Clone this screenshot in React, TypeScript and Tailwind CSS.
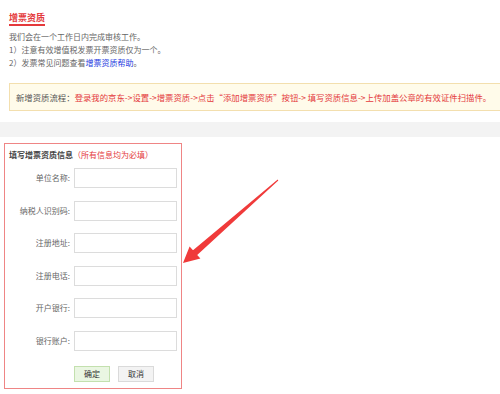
import React from 'react';

const fields = ['单位名称:', '纳税人识别码:', '注册地址:', '注册电话:', '开户银行:', '银行账户:'];

export default function App() {
  return (
    <div className="relative w-[500px] h-[394px] overflow-hidden bg-white font-['Noto_Sans_CJK_SC',sans-serif]">
      {/* intro */}
      <div className="pl-[9px] pt-[12px]">
        <div className="w-fit text-[9px] leading-[11px] font-bold text-[#e4393c] border-b-2 border-[#e4393c] pb-[1px]">
          增票资质
        </div>
        <div className="mt-[4px] text-[8px] leading-[13px] text-[#666]">
          <p>我们会在一个工作日内完成审核工作。</p>
          <p>1）注意有效增值税发票开票资质仅为一个。</p>
          <p>
            2）发票常见问题查看<span className="text-[#1d3be0]">增票资质帮助</span>。
          </p>
        </div>
      </div>

      {/* process tip */}
      <div className="ml-[9px] mt-[14px] h-[28px] w-[500px] flex items-center pl-[6px] border border-[#f3dfae] bg-[#fffbea] text-[8.4px] whitespace-nowrap">
        <span className="text-[#555]">新增资质流程：</span>
        <span className="text-[#e4393c]">
          登录我的京东-&gt;设置-&gt;增票资质-&gt;点击“添加增票资质”按钮-&gt; 填写资质信息-&gt;上传加盖公章的有效证件扫描件。
        </span>
      </div>

      <div className="mt-[11px] h-[15px] bg-[#f3f3f3]" />

      {/* form */}
      <div className="ml-[4px] mt-[6px] w-[178px] h-[246px] border border-[#ef8585]">
        <div className="pl-[4px] pt-[5px] text-[8px] leading-[12px] whitespace-nowrap">
          <span className="font-bold text-[#444]">填写增票资质信息</span>
          <span className="text-[#e4393c]">（所有信息均为必填）</span>
        </div>
        <div className="mt-[7px] flex flex-col gap-[12.6px]">
          {fields.map((f) => (
            <div key={f} className="flex items-center h-[20px]">
              <label className="w-[65px] text-right text-[8px] leading-[12px] text-[#666] whitespace-nowrap">{f}</label>
              <input
                className="ml-[4px] w-[103px] h-[20px] border border-[#dcdcdc] bg-white outline-none"
                type="text"
              />
            </div>
          ))}
        </div>
        <div className="mt-[15px] ml-[69px] flex gap-[8px]">
          <button className="w-[36px] h-[16px] border border-[#c3e0ae] bg-[#eaf6e2] text-[8px] text-[#333] leading-none">
            确定
          </button>
          <button className="w-[36px] h-[16px] border border-[#dadada] bg-[#f3f3f3] text-[8px] text-[#333] leading-none">
            取消
          </button>
        </div>
      </div>

      {/* annotation arrow */}
      <svg className="absolute left-0 top-0 pointer-events-none" width="500" height="394" viewBox="0 0 500 394">
        <polygon
          points="278.3,180.4 197.2,254.9 200.4,258.6 183,263 189.6,246.4 193,250.2 277.7,179.6"
          fill="#f03a3a"
        />
      </svg>
    </div>
  );
}
